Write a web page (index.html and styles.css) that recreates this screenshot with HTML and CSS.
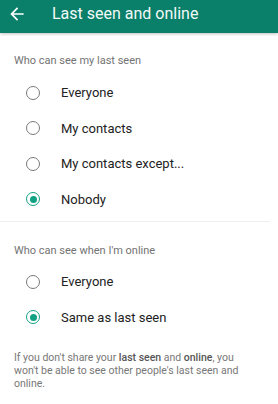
FILE: index.html
```html
<!DOCTYPE html>
<html lang="en">
<head>
<meta charset="utf-8">
<title>Last seen and online</title>
<link rel="stylesheet" href="styles.css">
</head>
<body>
<div class="app">
  <header class="topbar">
    <svg class="back" width="20" height="20" viewBox="0 0 24 24"><path d="M20 11H7.83l5.59-5.59L12 4l-8 8 8 8 1.41-1.41L7.83 13H20v-2z" fill="#fff"/></svg>
    <h1 class="title">Last seen and online</h1>
  </header>
  <section class="group">
    <div class="label">Who can see my last seen</div>
    <div class="row"><span class="radio"></span><span class="text">Everyone</span></div>
    <div class="row"><span class="radio"></span><span class="text">My contacts</span></div>
    <div class="row"><span class="radio"></span><span class="text">My contacts except...</span></div>
    <div class="row"><span class="radio checked"></span><span class="text">Nobody</span></div>
  </section>
  <div class="divider"></div>
  <section class="group second">
    <div class="label">Who can see when I'm online</div>
    <div class="row"><span class="radio"></span><span class="text">Everyone</span></div>
    <div class="row"><span class="radio checked"></span><span class="text">Same as last seen</span></div>
  </section>
  <p class="info"><span>If you don't share your </span><b>last seen</b><span> and </span><b>online</b><span>, you</span><br><span>won't be able to see other people's last seen and</span><br><span>online.</span></p>
</div>
</body>
</html>
```
FILE: styles.css
```css
html, body {
  margin: 0;
  padding: 0;
  background: #fff;
}
body {
  font-family: Roboto, "Noto Sans", Arial, sans-serif;
  width: 278px;
  height: 404px;
  overflow: hidden;
}
.topbar {
  height: 33px;
  background: #0a7f69;
  display: flex;
  align-items: center;
  padding-left: 7px;
  box-shadow: 0 1px 3px rgba(0,0,0,0.25);
  position: relative;
}
.back {
  width: 20px;
  height: 20px;
  margin-top: -6px;
}
.title {
  margin: -5px 0 0 25px;
  font-size: 16px;
  font-weight: 400;
  color: #f2faf8;
  line-height: 20px;
}
.group {
  padding-top: 21px;
}
.group.second {
  padding-top: 22px;
}
.label {
  padding-left: 14px;
  font-size: 11px;
  line-height: 14px;
  color: #737373;
  margin-bottom: 7px;
}
.second .label {
  margin-bottom: 6px;
}
.row {
  height: 35.5px;
  display: flex;
  align-items: center;
  padding-left: 26px;
}
.radio {
  width: 14px;
  height: 14px;
  box-sizing: border-box;
  border: 1.8px solid #7a7a7a;
  border-radius: 50%;
  display: flex;
  align-items: center;
  justify-content: center;
  flex: none;
}
.radio.checked {
  border-color: #12a283;
}
.radio.checked::after {
  content: "";
  width: 7px;
  height: 7px;
  border-radius: 50%;
  background: #12a283;
}
.text {
  margin-left: 21px;
  font-size: 13px;
  color: #222;
}
.divider {
  height: 1px;
  background: #eeeeee;
  margin: 4px 8px 0 0;
}
.info {
  margin: 16px 10px 0 14px;
  font-size: 10.5px;
  line-height: 13px;
  color: #777;
  white-space: nowrap;
}
.info b {
  font-weight: 500;
  color: #555;
}
```
